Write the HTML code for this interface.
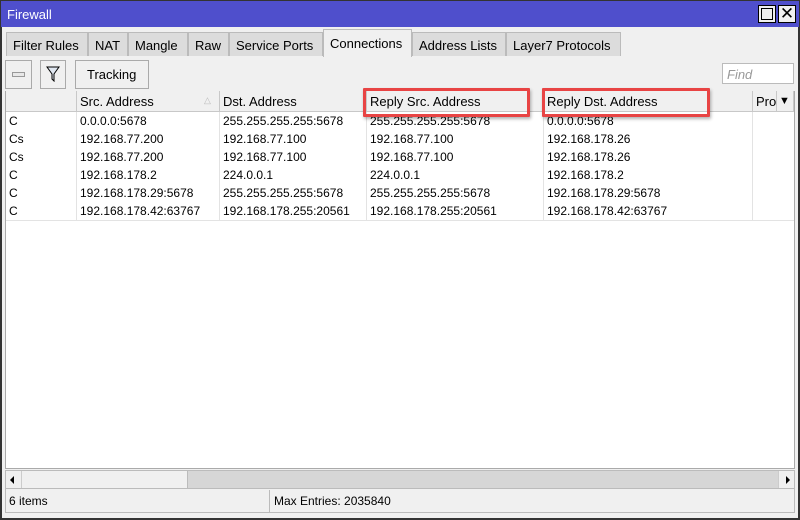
<!DOCTYPE html>
<html><head><style>
*{margin:0;padding:0;box-sizing:border-box}
body{width:800px;height:520px;overflow:hidden;background:#f0f0f0;font-family:"Liberation Sans",sans-serif;font-size:12px;color:#000;position:relative}
.a{position:absolute}
.win{left:0;top:0;width:800px;height:520px;border:2px solid #333;border-top:none;background:#f0f0f0}
.title{left:0;top:0;width:800px;height:27px;background:#4f4fcc;color:#fff;font-size:13px;padding:6px 0 0 6px;border:1px solid #333;border-bottom:none}
.tb{top:5px;width:18px;height:18px;background:#f0f0f0;border:1px solid #000}
.tab{top:32px;height:24px;background:#dcdcdc;border:1px solid #bbb;border-bottom:none;font-size:13px;padding:5px 0 0 6px}
.btn{top:60px;height:29px;background:#f0f0f0;border:1px solid #aaa}
.hd{top:91px;height:21px;background:#f0f0f0;border-right:1px solid #c8c8c8;border-bottom:1px solid #c8c8c8;padding:3px 0 0 3px;font-size:13px}
.vl{top:112px;width:1px;height:108px;background:#e3e3e3}
.cell{height:18px;padding:2px 0 0 3px;font-size:12px}
.red{border:3px solid #e84444;border-radius:1px;box-shadow:1px 2px 3px rgba(0,0,0,.3)}
</style></head><body>
<div class="a win"></div>
<div class="a title">Firewall</div>
<div class="a tb" style="left:758px"><div class="a" style="left:2px;top:2px;width:12px;height:12px;border:1px solid #000"></div></div>
<div class="a tb" style="left:778px;font-size:17px;line-height:15px;text-align:center">✕</div>

<div class="a tab" style="left:6px;width:82px">Filter Rules</div>
<div class="a tab" style="left:88px;width:40px">NAT</div>
<div class="a tab" style="left:128px;width:60px">Mangle</div>
<div class="a tab" style="left:188px;width:41px">Raw</div>
<div class="a tab" style="left:229px;width:94px">Service Ports</div>
<div class="a tab" style="left:323px;top:29px;width:89px;height:28px;background:#f0f0f0;padding-top:6px">Connections</div>
<div class="a tab" style="left:412px;width:94px">Address Lists</div>
<div class="a tab" style="left:506px;width:115px">Layer7 Protocols</div>

<div class="a btn" style="left:5px;width:27px"><div class="a" style="left:6px;top:11px;width:13px;height:5px;border:1px solid #999;background:#e8e8e8"></div></div>
<div class="a btn" style="left:40px;width:26px;text-align:center;padding-top:5px"><svg width="14" height="16" viewBox="0 0 14 16"><path d="M1 1H13L8 8V15L6 13V8Z" fill="#dfe6f0" stroke="#000"/></svg></div>
<div class="a btn" style="left:75px;width:74px;font-size:13px;padding:6px 0 0 11px">Tracking</div>
<div class="a" style="left:722px;top:63px;width:72px;height:21px;background:#fff;border:1px solid #bbb;color:#999;font-style:italic;font-size:13px;padding:3px 4px">Find</div>

<div class="a" style="left:5px;top:91px;width:790px;height:378px;background:#fff;border:1px solid #aaa"></div>
<div class="a hd" style="left:6px;width:71px"></div>
<div class="a hd" style="left:77px;width:143px">Src. Address<span class="a" style="left:127px;top:4px;color:#bbb;font-size:9px">△</span></div>
<div class="a hd" style="left:220px;width:147px">Dst. Address</div>
<div class="a hd" style="left:367px;width:177px">Reply Src. Address</div>
<div class="a hd" style="left:544px;width:209px">Reply Dst. Address</div>
<div class="a hd" style="left:753px;width:24px;overflow:hidden">Pro</div>
<div class="a hd" style="left:777px;width:17px;font-size:11px;padding:4px 0 0 2px">▼</div>

<div class="a vl" style="left:76px"></div><div class="a vl" style="left:219px"></div><div class="a vl" style="left:366px"></div><div class="a vl" style="left:543px"></div><div class="a vl" style="left:752px"></div>

<div class="a" style="left:6px;top:112px;width:790px">
<div style="display:flex"><div class="cell" style="width:71px">C</div><div class="cell" style="width:143px">0.0.0.0:5678</div><div class="cell" style="width:147px">255.255.255.255:5678</div><div class="cell" style="width:177px">255.255.255.255:5678</div><div class="cell">0.0.0.0:5678</div></div>
<div style="display:flex"><div class="cell" style="width:71px">Cs</div><div class="cell" style="width:143px">192.168.77.200</div><div class="cell" style="width:147px">192.168.77.100</div><div class="cell" style="width:177px">192.168.77.100</div><div class="cell">192.168.178.26</div></div>
<div style="display:flex"><div class="cell" style="width:71px">Cs</div><div class="cell" style="width:143px">192.168.77.200</div><div class="cell" style="width:147px">192.168.77.100</div><div class="cell" style="width:177px">192.168.77.100</div><div class="cell">192.168.178.26</div></div>
<div style="display:flex"><div class="cell" style="width:71px">C</div><div class="cell" style="width:143px">192.168.178.2</div><div class="cell" style="width:147px">224.0.0.1</div><div class="cell" style="width:177px">224.0.0.1</div><div class="cell">192.168.178.2</div></div>
<div style="display:flex"><div class="cell" style="width:71px">C</div><div class="cell" style="width:143px">192.168.178.29:5678</div><div class="cell" style="width:147px">255.255.255.255:5678</div><div class="cell" style="width:177px">255.255.255.255:5678</div><div class="cell">192.168.178.29:5678</div></div>
<div style="display:flex"><div class="cell" style="width:71px">C</div><div class="cell" style="width:143px">192.168.178.42:63767</div><div class="cell" style="width:147px">192.168.178.255:20561</div><div class="cell" style="width:177px">192.168.178.255:20561</div><div class="cell">192.168.178.42:63767</div></div>
</div>
<div class="a" style="left:6px;top:220px;width:788px;height:1px;background:#e3e3e3"></div>

<div class="a red" style="left:363px;top:88px;width:167px;height:29px"></div>
<div class="a red" style="left:542px;top:88px;width:168px;height:29px"></div>

<div class="a" style="left:5px;top:470px;width:790px;height:19px;background:#d6d6d6;border:1px solid #bbb"></div>
<div class="a" style="left:6px;top:471px;width:182px;height:17px;background:#f0f0f0;border-right:1px solid #bbb"></div>
<div class="a" style="left:6px;top:471px;width:16px;height:17px;background:#f0f0f0;border-right:1px solid #ccc"><svg class="a" style="left:3px;top:4px" width="8" height="10"><path d="M1 5L5 1V9Z" fill="#000"/></svg></div>
<div class="a" style="left:778px;top:471px;width:16px;height:17px;background:#f0f0f0;border-left:1px solid #ccc"><svg class="a" style="left:5px;top:4px" width="8" height="10"><path d="M6 5L2 1V9Z" fill="#000"/></svg></div>

<div class="a" style="left:5px;top:489px;width:790px;height:24px;border:1px solid #bbb;border-top:none"></div>
<div class="a" style="left:9px;top:494px;font-size:12px">6 items</div>
<div class="a" style="left:269px;top:490px;width:1px;height:22px;background:#bbb"></div>
<div class="a" style="left:274px;top:494px;font-size:12px">Max Entries: 2035840</div>
</body></html>
